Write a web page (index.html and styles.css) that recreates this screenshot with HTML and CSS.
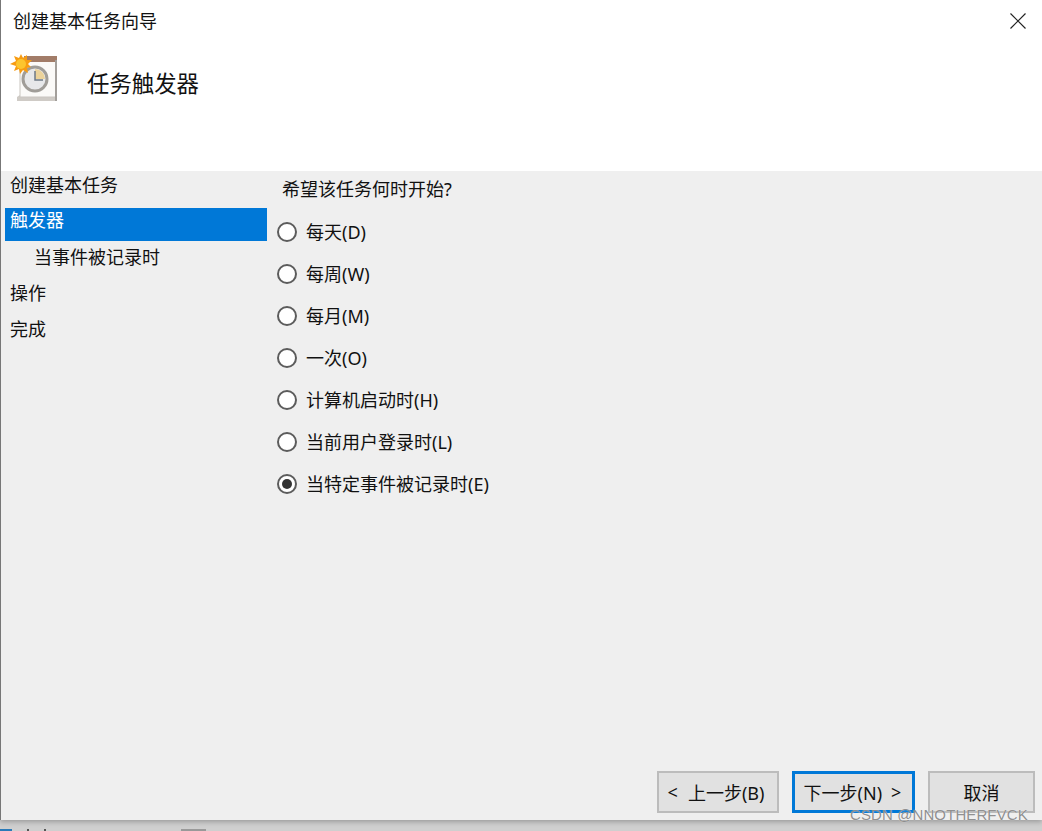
FILE: index.html
```html
<!DOCTYPE html>
<html lang="zh-CN">
<head>
    <meta charset="UTF-8">
    <meta name="viewport" content="width=device-width, initial-scale=1.0">
    <title>创建基本任务向导</title>
    <link rel="stylesheet" href="styles.css">
</head>
<body>
    <div class="wizard">
        <header class="wizard-header">
            <div class="title-bar">
                <span class="title-text">创建基本任务向导</span>
                <svg class="close-icon" width="18" height="18" viewBox="0 0 18 18" aria-label="关闭">
                    <path d="M1.5 1.5L16.5 16.5M16.5 1.5L1.5 16.5" stroke="#222" stroke-width="1.2" fill="none"/>
                </svg>
            </div>
            <div class="heading-row">
                <svg class="task-icon" width="50" height="50" viewBox="0 0 50 50">
                    <path d="M10 41L7 43L7 47L46 47L46 41Z" fill="#cfcbc6"/>
                    <rect x="10" y="4" width="36" height="39" fill="#fbfaf8" stroke="#c9c5c0"/>
                    <rect x="14" y="2" width="33" height="6" fill="#a27c68"/>
                    <rect x="45" y="6" width="2" height="41" fill="#a39f9b"/>
                    <circle cx="25" cy="25" r="12" fill="#e7e8ea" stroke="#a09d98" stroke-width="3"/>
                    <path d="M25 15A10 10 0 0 1 35 25L25 25Z" fill="#ecd39a"/>
                    <path d="M25 17L25 26L33 26" stroke="#6f7a86" stroke-width="1.5" fill="none"/>
                    <path d="M11 0L13 4L17 1L17 6L22 6L18 10L21 13L17 14L18 19L13 16L10 20L9 15L4 17L6 12L0 10L6 7L4 2L9 4Z" fill="#f79c12"/>
                    <circle cx="11" cy="10" r="5" fill="#fcc52e"/>
                </svg>
                <h1 class="heading-text">任务触发器</h1>
            </div>
        </header>

        <main class="wizard-body">
            <nav class="steps">
                <div class="step">创建基本任务</div>
                <div class="step active">触发器</div>
                <div class="step sub">当事件被记录时</div>
                <div class="step">操作</div>
                <div class="step">完成</div>
            </nav>

            <section class="content">
                <p class="question">希望该任务何时开始?</p>
                <div class="radio-list">
                    <div class="radio-row"><span class="radio"></span>每天(D)</div>
                    <div class="radio-row"><span class="radio"></span>每周(W)</div>
                    <div class="radio-row"><span class="radio"></span>每月(M)</div>
                    <div class="radio-row"><span class="radio"></span>一次(O)</div>
                    <div class="radio-row"><span class="radio"></span>计算机启动时(H)</div>
                    <div class="radio-row"><span class="radio"></span>当前用户登录时(L)</div>
                    <div class="radio-row"><span class="radio checked"></span>当特定事件被记录时(E)</div>
                </div>
            </section>
        </main>

        <footer class="wizard-footer">
            <div class="btn btn-back"><span>&lt;</span>上一步(B)</div>
            <div class="btn btn-next">下一步(N)<span>&gt;</span></div>
            <div class="btn btn-cancel">取消</div>
        </footer>
    </div>
    <div class="under-strip">
        <span class="strip-blue"></span>
        <span class="strip-tick"></span>
        <span class="strip-tick"></span>
        <span class="strip-grey"></span>
    </div>
    <div class="watermark">CSDN @NNOTHERFVCK</div>
</body>
</html>
```

FILE: styles.css
```css
html, body {
  margin: 0;
  padding: 0;
}

body {
  width: 1042px;
  height: 831px;
  overflow: hidden;
  position: relative;
  background: #cfcfcf;
  font-family: "Noto Sans", "Noto Sans CJK SC", sans-serif;
  font-size: 18px;
  color: #111;
}

.wizard {
  height: 820px;
  display: flex;
  flex-direction: column;
  border-left: 1px solid #777;
  background: #efefef;
  box-shadow: 0 2px 5px rgba(0, 0, 0, 0.25);
  position: relative;
}

.wizard-header {
  height: 171px;
  background: #fff;
  flex-shrink: 0;
}

.title-bar {
  height: 42px;
  display: flex;
  align-items: center;
  justify-content: space-between;
  padding: 0 15px 0 12px;
}

.title-text {
  line-height: 42px;
}

.close-icon {
  display: block;
}

.heading-row {
  display: flex;
  align-items: center;
  gap: 27px;
  padding: 12px 0 0 9px;
}

.heading-text {
  margin: 6px 0 0;
  font-size: 22.4px;
  font-weight: 400;
}

.wizard-body {
  flex: 1;
  display: flex;
}

.steps {
  width: 262px;
  padding-left: 4px;
  flex-shrink: 0;
}

.step {
  height: 36px;
  line-height: 28px;
  padding-left: 5px;
}

.step.active {
  height: 33px;
  margin: 1px 0 2px;
  line-height: 24px;
  background: #0078d7;
  color: #fff;
}

.step.sub {
  padding-left: 29px;
}

.content {
  padding: 4px 0 0 10px;
}

.question {
  margin: 0 0 7px 5px;
  height: 28px;
  line-height: 28px;
}

.radio-list {
  display: flex;
  flex-direction: column;
}

.radio-row {
  height: 42px;
  display: flex;
  align-items: center;
  gap: 9px;
}

.radio {
  width: 20px;
  height: 20px;
  margin-top: 2px;
  box-sizing: border-box;
  border: 2px solid #5c5c5c;
  border-radius: 50%;
  background: #fff;
  display: flex;
  align-items: center;
  justify-content: center;
}

.radio.checked::after {
  content: "";
  width: 10px;
  height: 10px;
  border-radius: 50%;
  background: #333;
}

.wizard-footer {
  display: flex;
  padding: 0 7px 7px 0;
  justify-content: flex-end;
  gap: 13px;
}

.btn {
  height: 42px;
  box-sizing: border-box;
  border: 2px solid #bcbcbc;
  background: #e1e1e1;
  display: flex;
  align-items: center;
  justify-content: center;
}

.btn-back {
  width: 122px;
  gap: 10px;
  padding-right: 4px;
}

.btn-next {
  width: 123px;
  gap: 9px;
  padding-right: 2px;
  border: 3px solid #0078d7;
}

.btn-cancel {
  width: 107px;
}

.under-strip {
  height: 11px;
  display: flex;
  align-items: flex-end;
  gap: 15px;
}

.strip-blue {
  width: 12px;
  height: 2px;
  background: #2a7ab8;
}

.strip-tick {
  width: 2px;
  height: 2px;
  background: #555;
}

.strip-grey {
  width: 25px;
  height: 2px;
  margin-left: 120px;
  background: #999;
}

.watermark {
  position: absolute;
  left: 850px;
  top: 806px;
  font-family: "Liberation Sans", sans-serif;
  font-size: 15px;
  letter-spacing: 0.1px;
  color: rgba(130, 130, 130, 0.9);
  text-shadow: 0 0 1px rgba(255, 255, 255, 0.8);
}
```
